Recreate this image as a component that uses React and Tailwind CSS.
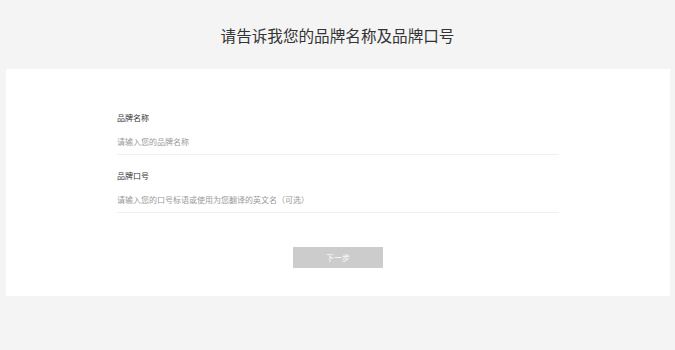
export default function App() {
  return (
    <div className="min-h-[350px] bg-[#f4f4f4] font-['Noto_Sans_CJK_SC',sans-serif] text-[#333]">
      <div className="h-[69px] flex items-center justify-center">
        <h1 className="text-[15.6px] leading-[24px] font-normal text-[#333]">请告诉我您的品牌名称及品牌口号</h1>
      </div>
      <div className="ml-[6px] mr-[5px] h-[227px] bg-white">
        <div className="w-[442px] mx-auto pt-[43px]">
          <div className="text-[8px] leading-[12px] h-[12px] text-[#333]">品牌名称</div>
          <input
            className="mt-[6px] block w-full h-[25px] border-b border-[#f0f0f0] text-[8px] outline-none placeholder:text-[#999] pb-[1px]"
            placeholder="请输入您的品牌名称"
          />
          <div className="mt-[15px] text-[8px] leading-[12px] h-[12px] text-[#333]">品牌口号</div>
          <input
            className="mt-[6px] block w-full h-[25px] border-b border-[#f0f0f0] text-[8px] outline-none placeholder:text-[#999] pb-[1px]"
            placeholder="请输入您的口号标语或使用为您翻译的英文名（可选）"
          />
          <div className="mt-[34px] flex justify-center">
            <button className="w-[90px] h-[21px] bg-[#cccccc] text-white text-[8px] leading-[21px]">下一步</button>
          </div>
        </div>
      </div>
    </div>
  )
}
